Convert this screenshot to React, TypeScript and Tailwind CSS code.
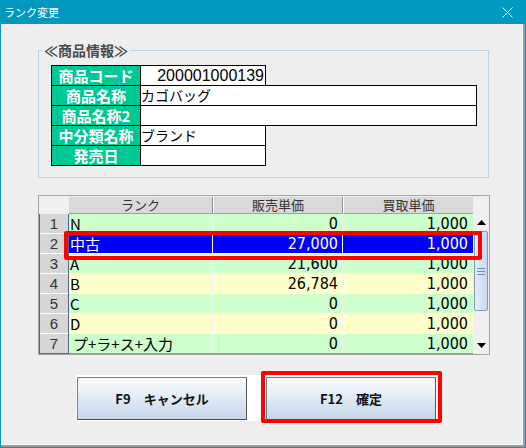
import React from 'react';

const jp = "font-['Noto_Sans_CJK_JP',sans-serif]";
const narrow = "font-['Liberation_Sans_Narrow','DejaVu_Sans_Condensed','Noto_Sans_CJK_JP',sans-serif]";

type InfoRow = { label: string; value: string; wide: boolean; align?: 'right' };

const infoRows: InfoRow[] = [
	{ label: '商品コード', value: '200001000139', wide: false, align: 'right' },
	{ label: '商品名称', value: 'カゴバッグ', wide: true },
	{ label: '商品名称2', value: '', wide: true },
	{ label: '中分類名称', value: 'ブランド', wide: false },
	{ label: '発売日', value: '', wide: false },
];

const ranks = [
	{ rank: 'N', sell: '0', buy: '1,000' },
	{ rank: '中古', sell: '27,000', buy: '1,000' },
	{ rank: 'A', sell: '21,600', buy: '1,000' },
	{ rank: 'B', sell: '26,784', buy: '1,000' },
	{ rank: 'C', sell: '0', buy: '1,000' },
	{ rank: 'D', sell: '0', buy: '1,000' },
	{ rank: 'プ+ラ+ス+入力', sell: '0', buy: '1,000' },
];

const Scrollbar = () => (
	<div className="w-[16px] flex flex-col bg-[#f0f0f0]">
		<div className="h-[17px]" />
		<div className="h-[17px] flex items-center justify-center">
			<svg width="9" height="5" viewBox="0 0 9 5">
				<path d="M0 5 L4.5 0 L9 5 Z" fill="#000" />
			</svg>
		</div>
		<div className="h-[80px] mx-px border border-[#7a9cc4] rounded-[2px] bg-linear-to-r from-[#e6eefa] to-[#c6d8ef] flex flex-col items-center justify-center gap-[2px]">
			<div className="w-[8px] h-px bg-[#6a8cbc]" />
			<div className="w-[8px] h-px bg-[#6a8cbc]" />
			<div className="w-[8px] h-px bg-[#6a8cbc]" />
		</div>
		<div className="flex-1" />
		<div className="h-[17px] flex items-center justify-center">
			<svg width="9" height="5" viewBox="0 0 9 5">
				<path d="M0 0 L4.5 5 L9 0 Z" fill="#000" />
			</svg>
		</div>
	</div>
);

export default function App() {
	return (
		<div className="w-[526px] h-[448px] bg-[#0398bf] flex flex-col px-px pb-px">
			{/* title bar */}
			<div className="h-[24px] flex items-center justify-between pl-[3px] pr-[12px]">
				<span className={`${jp} text-white text-[11px] leading-none`}>ランク変更</span>
				<svg width="11" height="11" viewBox="0 0 11 11">
					<path d="M0.5 0.5 L10.5 10.5 M10.5 0.5 L0.5 10.5" stroke="#fff" strokeWidth="1" />
				</svg>
			</div>

			<div className="flex-1 border-r-2 border-b-2 border-[#9c9c9c]">
				<div className="w-full h-full bg-[#eeeeee] border-r border-b border-white flex flex-col">
					{/* product info */}
					<fieldset className="ml-[37px] mt-[17px] w-[451px] h-[137px] border border-[#b9d1ea]">
						<legend className={`${jp} ml-[3px] px-[2px] text-[14px] leading-[18px] font-bold text-[#4a4a4a]`}>
							≪商品情報≫
						</legend>
						<div className="ml-[12px] mt-[6px] flex flex-col">
							{infoRows.map((row) => (
								<div className="flex -mt-px first:mt-0" key={row.label}>
									<div className={`${jp} w-[90px] h-[21px] border border-black bg-[#00c894] text-white font-bold text-[15px] leading-[19px] text-center`}>
										{row.label}
									</div>
									<div
										className={`-ml-px h-[21px] border border-black bg-white text-black ${row.wide ? 'w-[337px]' : 'w-[126px]'} ${
											row.align === 'right'
												? "font-['Liberation_Sans',sans-serif] text-[16px] leading-[19px] text-right pr-px"
												: `${jp} text-[14px] leading-[19px] pl-0`
										}`}
									>
										{row.value}
									</div>
								</div>
							))}
						</div>
					</fieldset>

					{/* rank grid */}
					<div className="relative ml-[37px] mt-[17px] w-[452px] h-[160px] border border-[#a5a5a5] pt-px flex">
						<div className="w-[434px] flex flex-col">
							<div className={`${jp} h-[17px] flex text-[13px] leading-[16px] text-[#333]`}>
								<div className="w-[30px] bg-[#f0f0f0]" />
								<div className="w-[144px] bg-[#d9d9d9] border-r border-[#8c8c8c] border-b border-b-[#a0a0a0] text-center">ランク</div>
								<div className="w-[130px] bg-[#d9d9d9] border-r border-[#8c8c8c] border-b border-b-[#a0a0a0] border-l border-l-white text-center">販売単価</div>
								<div className="w-[130px] bg-[#d9d9d9] border-b border-b-[#a0a0a0] border-l border-l-white text-center">買取単価</div>
							</div>
							<div className="flex">
								<div className="w-[30px] flex flex-col border-l border-b border-r border-[#56688a]">
									{ranks.map((_, i) => (
										<div
											key={i}
											className="h-[20px] last:h-[19px] bg-[#d6d6d6] border-b border-white last:border-b-0 text-center font-['Liberation_Sans',sans-serif] text-[15px] leading-[19px] text-[#333]"
										>
											{i + 1}
										</div>
									))}
								</div>
								<div className="flex-1 flex flex-col border-b border-[#8a9a9a]">
									{ranks.map((r, i) => {
										const selected = i === 1;
										const bg = selected ? 'bg-[#0000ff] text-white' : i % 2 === 0 ? 'bg-[#ccffcc] text-black' : 'bg-[#ffffcc] text-black';
										return (
											<div key={i} className={`h-[20px] last:h-[19px] flex border-b border-white last:border-b-0 ${bg}`}>
												<div className={`${jp} w-[144px] border-r ${selected ? 'border-white' : 'border-[#eef4ee]'} text-[15px] leading-[19px] ${i === 6 ? 'pl-[4px]' : 'pl-px'} ${selected ? 'pl-[3px]' : ''}`}>
													{r.rank}
												</div>
												<div className={`${narrow} w-[130px] border-r ${selected ? 'border-white' : 'border-[#eef4ee]'} text-[16px] leading-[19px] text-right pr-[4px]`}>
													{r.sell}
												</div>
												<div className={`${narrow} w-[130px] text-[16px] leading-[19px] text-right pr-[5px]`}>{r.buy}</div>
											</div>
										);
									})}
								</div>
							</div>
						</div>
						<Scrollbar />
						<div className="absolute left-[25px] top-[35px] w-[418px] h-[29px] border-4 border-[#ff0000] rounded-[2px]" />
					</div>

					{/* buttons */}
					<div className="ml-[75px] mt-[20px] w-fit bg-white pl-px pr-px pt-[2px] pb-px flex gap-[19px]">
						<button className={`${jp} w-[170px] h-[43px] border border-[#6f7f8f] border-b-[#4a4a4a] border-r-[#5a5a5a] bg-linear-to-b from-[#fbfdff] to-[#c4d6ea] text-[13px] font-bold text-[#111]`}>
							F9　キャンセル
						</button>
						<div className="relative">
							<button className={`${jp} w-[170px] h-[43px] border border-[#6f7f8f] border-b-[#4a4a4a] border-r-[#5a5a5a] bg-linear-to-b from-[#fbfdff] to-[#c4d6ea] text-[13px] font-bold text-[#111]`}>
								F12　確定
							</button>
							<div className="absolute -left-[5px] -top-[6px] w-[181px] h-[52px] border-4 border-[#ff0000] rounded-[2px]" />
						</div>
					</div>
				</div>
			</div>
		</div>
	);
}
